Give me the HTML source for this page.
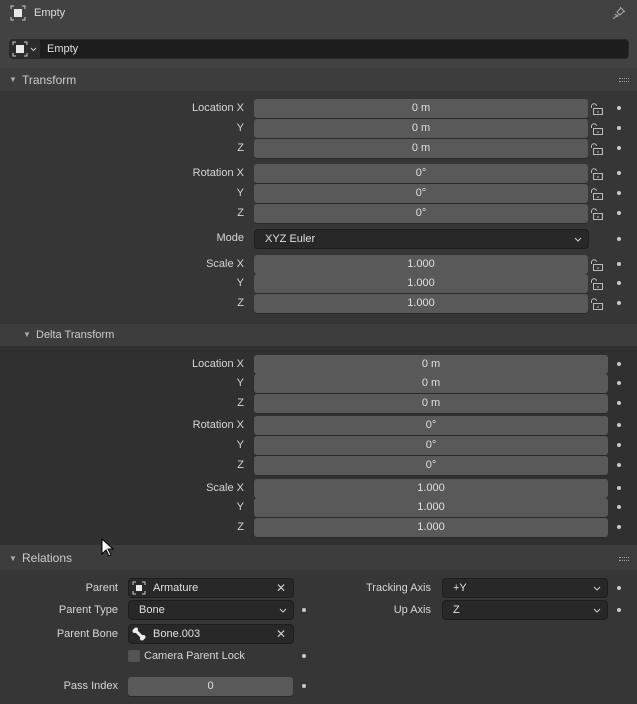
<!DOCTYPE html>
<html><head><meta charset="utf-8"><style>
*{margin:0;padding:0;box-sizing:border-box}
body{width:637px;height:704px;background:#3d3d3d;font-family:"Liberation Sans",sans-serif;font-size:11px;color:#d6d6d6;position:relative;overflow:hidden}
.a{position:absolute}
.lb{position:absolute;text-align:right;line-height:19px;height:19px;top:0}
.f{position:absolute;height:19px;background:#595959;border-radius:3px;line-height:19px;text-align:center;color:#e0e0e0;box-shadow:0 1px 0 #2a2a2a}
.d{position:absolute;height:20px;background:#282828;border-radius:4px;line-height:19px;padding-left:10px;color:#e0e0e0;border:1px solid #1e1e1e}
.dot{position:absolute;width:4px;height:4px;border-radius:2px;background:#c8c8c8}
.chev{position:absolute;right:6px;top:7px;width:8px;height:5px}
.x{position:absolute;right:7px;top:0;font-size:12px;color:#ccc}
</style></head><body>
<div class="a" style="left:0;top:0;width:637px;height:68px;background:#424242"></div>
<svg class="a" style="left:10px;top:5px" width="16" height="16"><path d="M1 4V1H4M12 1H15V4M15 12V15H12M4 15H1V12" stroke="#ccc" fill="none"/><rect x="4" y="4" width="8" height="8" fill="#e8e8e8"/></svg>
<div class="a" style="left:34px;top:7px;color:#ddd">Empty</div>
<svg class="a" style="left:612px;top:6px" width="14" height="14"><path d="M8 1L13 6M9 2L5 6L8 9L12 5M3 8L6 11M6.5 8.5L1 13" stroke="#aaa" fill="none"/></svg>
<div class="a" style="left:9px;top:39px;width:620px;height:20px;background:#1d1d1d;border-radius:4px;border:1px solid #2a2a2a"></div>
<div class="a" style="left:10px;top:40px;width:30px;height:18px;background:#2c2c2c;border-radius:3px 0 0 3px"></div>
<svg class="a" style="left:12px;top:41px" width="16" height="16"><path d="M1 4V1H4M12 1H15V4M15 12V15H12M4 15H1V12" stroke="#ccc" fill="none"/><rect x="4" y="4" width="8" height="8" fill="#e8e8e8"/></svg>
<svg class="a" style="left:30px;top:47px" width="7" height="5"><path d="M1 1L3.5 3.5L6 1" stroke="#ccc" fill="none"/></svg>
<div class="a" style="left:47px;top:43px;color:#e0e0e0">Empty</div>
<div class="a" style="left:9px;top:75px;font-size:8px;color:#aaa">▼</div>
<div class="a" style="left:22px;top:73px;font-size:12px;color:#ccc">Transform</div>
<div class="a" style="left:619px;top:78px;width:10px;height:4px;border-top:1px dotted #999;border-bottom:1px dotted #999"></div>
<div class="a" style="left:0;top:91px;width:637px;height:233px;background:#363636"></div>
<div class="lb" style="left:100px;width:144px;top:99px">Location X</div>
<div class="lb" style="left:100px;width:144px;top:119px">Y</div>
<div class="lb" style="left:100px;width:144px;top:139px">Z</div>
<div class="f" style="left:254px;width:334px;top:99px">0 m</div>
<div class="f" style="left:254px;width:334px;top:119px">0 m</div>
<div class="f" style="left:254px;width:334px;top:139px">0 m</div>
<div class="lb" style="left:100px;width:144px;top:164px">Rotation X</div>
<div class="lb" style="left:100px;width:144px;top:184px">Y</div>
<div class="lb" style="left:100px;width:144px;top:204px">Z</div>
<div class="f" style="left:254px;width:334px;top:164px">0°</div>
<div class="f" style="left:254px;width:334px;top:184px">0°</div>
<div class="f" style="left:254px;width:334px;top:204px">0°</div>
<div class="lb" style="left:100px;width:144px;top:229px">Mode</div>
<div class="d" style="left:254px;width:335px;top:229px">XYZ Euler<svg class="chev"><path d="M1 1L4 4L7 1" stroke="#ccc" fill="none"/></svg></div>
<div class="lb" style="left:100px;width:144px;top:255px">Scale X</div>
<div class="lb" style="left:100px;width:144px;top:274px">Y</div>
<div class="lb" style="left:100px;width:144px;top:294px">Z</div>
<div class="f" style="left:254px;width:334px;top:255px">1.000</div>
<div class="f" style="left:254px;width:334px;top:274px">1.000</div>
<div class="f" style="left:254px;width:334px;top:294px">1.000</div>
<svg class="a" style="left:590px;top:102px" width="18" height="210">
<defs><g id="L"><path d="M1.5 6V4.5A2.5 2.5 0 0 1 6.5 4" stroke="#bbb" fill="none"/><rect x="3.5" y="6.5" width="9" height="6" stroke="#bbb" fill="none"/><rect x="7.5" y="9" width="1" height="2" fill="#bbb"/></g></defs>
<use href="#L" y="0"/><use href="#L" y="20"/><use href="#L" y="40"/><use href="#L" y="65"/><use href="#L" y="85"/><use href="#L" y="105"/><use href="#L" y="156"/><use href="#L" y="175"/><use href="#L" y="195"/>
</svg>
<div class="dot" style="left:617px;top:106px"></div><div class="dot" style="left:617px;top:126px"></div><div class="dot" style="left:617px;top:146px"></div>
<div class="dot" style="left:617px;top:171px"></div><div class="dot" style="left:617px;top:191px"></div><div class="dot" style="left:617px;top:211px"></div>
<div class="dot" style="left:617px;top:237px"></div>
<div class="dot" style="left:617px;top:262px"></div><div class="dot" style="left:617px;top:281px"></div><div class="dot" style="left:617px;top:301px"></div>
<div class="a" style="left:23px;top:330px;font-size:8px;color:#aaa">▼</div>
<div class="a" style="left:36px;top:329px;color:#ccc">Delta Transform</div>
<div class="a" style="left:0;top:346px;width:637px;height:199px;background:#303030"></div>
<div class="lb" style="left:100px;width:144px;top:355px">Location X</div>
<div class="lb" style="left:100px;width:144px;top:374px">Y</div>
<div class="lb" style="left:100px;width:144px;top:394px">Z</div>
<div class="f" style="left:254px;width:354px;top:355px">0 m</div>
<div class="f" style="left:254px;width:354px;top:374px">0 m</div>
<div class="f" style="left:254px;width:354px;top:394px">0 m</div>
<div class="lb" style="left:100px;width:144px;top:416px">Rotation X</div>
<div class="lb" style="left:100px;width:144px;top:436px">Y</div>
<div class="lb" style="left:100px;width:144px;top:456px">Z</div>
<div class="f" style="left:254px;width:354px;top:416px">0°</div>
<div class="f" style="left:254px;width:354px;top:436px">0°</div>
<div class="f" style="left:254px;width:354px;top:456px">0°</div>
<div class="lb" style="left:100px;width:144px;top:479px">Scale X</div>
<div class="lb" style="left:100px;width:144px;top:498px">Y</div>
<div class="lb" style="left:100px;width:144px;top:518px">Z</div>
<div class="f" style="left:254px;width:354px;top:479px">1.000</div>
<div class="f" style="left:254px;width:354px;top:498px">1.000</div>
<div class="f" style="left:254px;width:354px;top:518px">1.000</div>
<div class="dot" style="left:617px;top:362px"></div><div class="dot" style="left:617px;top:381px"></div><div class="dot" style="left:617px;top:401px"></div>
<div class="dot" style="left:617px;top:423px"></div><div class="dot" style="left:617px;top:443px"></div><div class="dot" style="left:617px;top:463px"></div>
<div class="dot" style="left:617px;top:486px"></div><div class="dot" style="left:617px;top:505px"></div><div class="dot" style="left:617px;top:525px"></div>
<div class="a" style="left:0;top:546px;width:637px;height:24px;background:#3d3d3d"></div>
<div class="a" style="left:9px;top:554px;font-size:8px;color:#aaa">▼</div>
<div class="a" style="left:22px;top:551px;font-size:12px;color:#ccc">Relations</div>
<div class="a" style="left:619px;top:557px;width:10px;height:4px;border-top:1px dotted #999;border-bottom:1px dotted #999"></div>
<div class="a" style="left:0;top:570px;width:637px;height:134px;background:#363636"></div>
<svg class="a" style="left:101px;top:538px" width="14" height="20"><path d="M1 1V16L5 12L8 18L10 17L7 11H12Z" fill="#fff" stroke="#000"/></svg>
<div class="lb" style="left:0;width:118px;top:579px">Parent</div>
<div class="d" style="left:128px;width:166px;top:578px;padding-left:24px">Armature<span class="x">✕</span></div>
<svg class="a" style="left:132px;top:581px" width="14" height="14"><path d="M1 4V1H4M10 1H13V4M13 10V13H10M4 13H1V10" stroke="#ccc" fill="none"/><rect x="4" y="4" width="6" height="6" fill="#e8e8e8"/></svg>
<div class="lb" style="left:0;width:118px;top:601px">Parent Type</div>
<div class="d" style="left:128px;width:166px;top:600px">Bone<svg class="chev"><path d="M1 1L4 4L7 1" stroke="#ccc" fill="none"/></svg></div>
<div class="lb" style="left:0;width:118px;top:625px">Parent Bone</div>
<div class="d" style="left:128px;width:166px;top:624px;padding-left:24px">Bone.003<span class="x">✕</span></div>
<svg class="a" style="left:132px;top:627px" width="14" height="14"><path d="M3 3L11 11" stroke="#eee" stroke-width="3"/><circle cx="2.5" cy="4" r="2" fill="#eee"/><circle cx="4" cy="2.5" r="2" fill="#eee"/><circle cx="10" cy="11.5" r="2" fill="#eee"/><circle cx="11.5" cy="10" r="2" fill="#eee"/></svg>
<div class="a" style="left:128px;top:650px;width:12px;height:12px;background:#545454;border-radius:2px"></div>
<div class="a" style="left:144px;top:650px">Camera Parent Lock</div>
<div class="lb" style="left:0;width:118px;top:677px">Pass Index</div>
<div class="f" style="left:128px;width:165px;top:677px">0</div>
<div class="dot" style="left:302px;top:608px"></div><div class="dot" style="left:302px;top:654px"></div><div class="dot" style="left:302px;top:684px"></div>
<div class="lb" style="left:300px;width:131px;top:579px">Tracking Axis</div>
<div class="d" style="left:442px;width:166px;top:578px">+Y<svg class="chev"><path d="M1 1L4 4L7 1" stroke="#ccc" fill="none"/></svg></div>
<div class="lb" style="left:300px;width:131px;top:601px">Up Axis</div>
<div class="d" style="left:442px;width:166px;top:600px">Z<svg class="chev"><path d="M1 1L4 4L7 1" stroke="#ccc" fill="none"/></svg></div>
<div class="dot" style="left:617px;top:586px"></div><div class="dot" style="left:617px;top:608px"></div>
</body></html>
